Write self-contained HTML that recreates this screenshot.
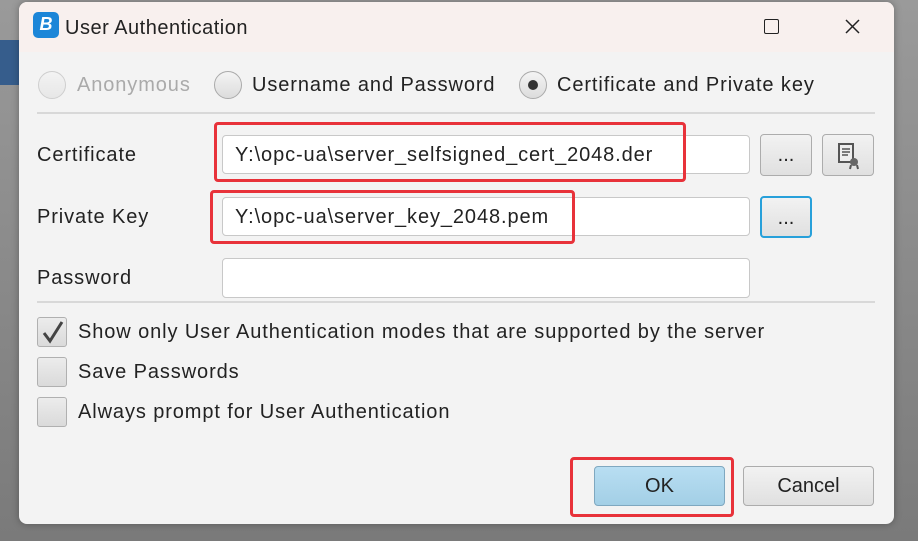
<!DOCTYPE html><html><head><style>
body{margin:0;width:918px;height:541px;overflow:hidden;background:linear-gradient(#9a9a9a,#7a7a7a);font-family:"Liberation Sans",sans-serif;position:relative}
.a{position:absolute}
.dlg{left:19px;top:2px;width:875px;height:522px;background:#f3f3f3;border-radius:8px;overflow:hidden;box-shadow:0 0 8px rgba(0,0,0,.3)}
.tb{left:0;top:0;width:875px;height:50px;background:#f8f0ee}
.t{font-size:20px;color:#222;letter-spacing:0.9px;white-space:nowrap}
.rad{width:28px;height:28px;border-radius:50%;border:1px solid #aaa;background:linear-gradient(#f4f4f4,#dcdcdc);box-sizing:border-box}
.inp{background:#fff;border:1px solid #c8c8c8;border-radius:4px;box-sizing:border-box}
.btn{border:1px solid #acacac;border-radius:4px;box-sizing:border-box;background:linear-gradient(#f2f2f2,#e0e0e0);text-align:center;font-size:20px;color:#222}
.cb{width:30px;height:30px;border:1px solid #b0b0b0;border-radius:3px;box-sizing:border-box;background:linear-gradient(#ececec,#dadada)}
.red{border:3px solid #e8323a;border-radius:4px;box-sizing:border-box}
.sep{height:2px;background:#d8d8d8}
</style></head><body>
<div class="a" style="left:0;top:40px;width:19px;height:45px;background:#1e4f8a;opacity:.8"></div>
<div class="a dlg">
<div class="a tb"></div>
</div>
<div class="a" style="left:33px;top:12px;width:26px;height:26px;border-radius:5px;background:#1c86d8;color:#fff;font-weight:bold;font-style:italic;font-size:18px;text-align:center;line-height:24px">B</div>
<div class="a t" style="left:65px;top:17px;letter-spacing:0.5px">User Authentication</div>
<div class="a" style="left:764px;top:19px;width:13px;height:13px;border:1.5px solid #222;border-radius:2px"></div>
<svg class="a" style="left:845px;top:19px" width="15" height="15"><path d="M1 1L14 14M14 1L1 14" stroke="#222" stroke-width="1.5"/></svg>
<div class="a rad" style="left:38px;top:71px;opacity:.5"></div>
<div class="a t" style="left:77px;top:74px;color:#aaa">Anonymous</div>
<div class="a rad" style="left:214px;top:71px"></div>
<div class="a t" style="left:252px;top:74px">Username and Password</div>
<div class="a rad" style="left:519px;top:71px"></div>
<div class="a" style="left:528px;top:80px;width:10px;height:10px;border-radius:50%;background:#333"></div>
<div class="a t" style="left:557px;top:74px">Certificate and Private key</div>
<div class="a sep" style="left:37px;top:112px;width:838px"></div>
<div class="a t" style="left:37px;top:144px">Certificate</div>
<div class="a inp" style="left:222px;top:135px;width:528px;height:39px"></div>
<div class="a t" style="left:235px;top:144px">Y:\opc-ua\server_selfsigned_cert_2048.der</div>
<div class="a btn" style="left:760px;top:134px;width:52px;height:42px;line-height:40px">...</div>
<div class="a btn" style="left:822px;top:134px;width:52px;height:42px"></div>
<svg class="a" style="left:836px;top:142px" width="26" height="28"><path d="M3 2h14v18H3z" fill="#eee" stroke="#555" stroke-width="2"/><path d="M6 7h8M6 10h8M6 13h6" stroke="#555" stroke-width="1.5"/><circle cx="18" cy="20" r="4" fill="#666"/><path d="M15 23l-1 4M21 23l1 4" stroke="#555" stroke-width="2"/></svg>
<div class="a t" style="left:37px;top:206px">Private Key</div>
<div class="a inp" style="left:222px;top:197px;width:528px;height:39px"></div>
<div class="a t" style="left:235px;top:206px">Y:\opc-ua\server_key_2048.pem</div>
<div class="a btn" style="left:760px;top:196px;width:52px;height:42px;line-height:40px;border:2px solid #27a0da">...</div>
<div class="a t" style="left:37px;top:267px">Password</div>
<div class="a inp" style="left:222px;top:258px;width:528px;height:40px"></div>
<div class="a sep" style="left:37px;top:301px;width:838px"></div>
<div class="a cb" style="left:37px;top:317px"></div>
<svg class="a" style="left:40px;top:319px" width="26" height="26"><path d="M4 14l6 8L22 3" fill="none" stroke="#444" stroke-width="3"/></svg>
<div class="a t" style="left:78px;top:321px">Show only User Authentication modes that are supported by the server</div>
<div class="a cb" style="left:37px;top:357px"></div>
<div class="a t" style="left:78px;top:361px">Save Passwords</div>
<div class="a cb" style="left:37px;top:397px"></div>
<div class="a t" style="left:78px;top:401px">Always prompt for User Authentication</div>
<div class="a btn" style="left:594px;top:466px;width:131px;height:40px;line-height:39px;background:linear-gradient(#b8def2,#a3cfe6);border-color:#7fa8c0">OK</div>
<div class="a btn" style="left:743px;top:466px;width:131px;height:40px;line-height:39px">Cancel</div>
<div class="a red" style="left:214px;top:122px;width:472px;height:60px"></div>
<div class="a red" style="left:210px;top:190px;width:365px;height:54px"></div>
<div class="a red" style="left:570px;top:457px;width:164px;height:60px"></div>
</body></html>
